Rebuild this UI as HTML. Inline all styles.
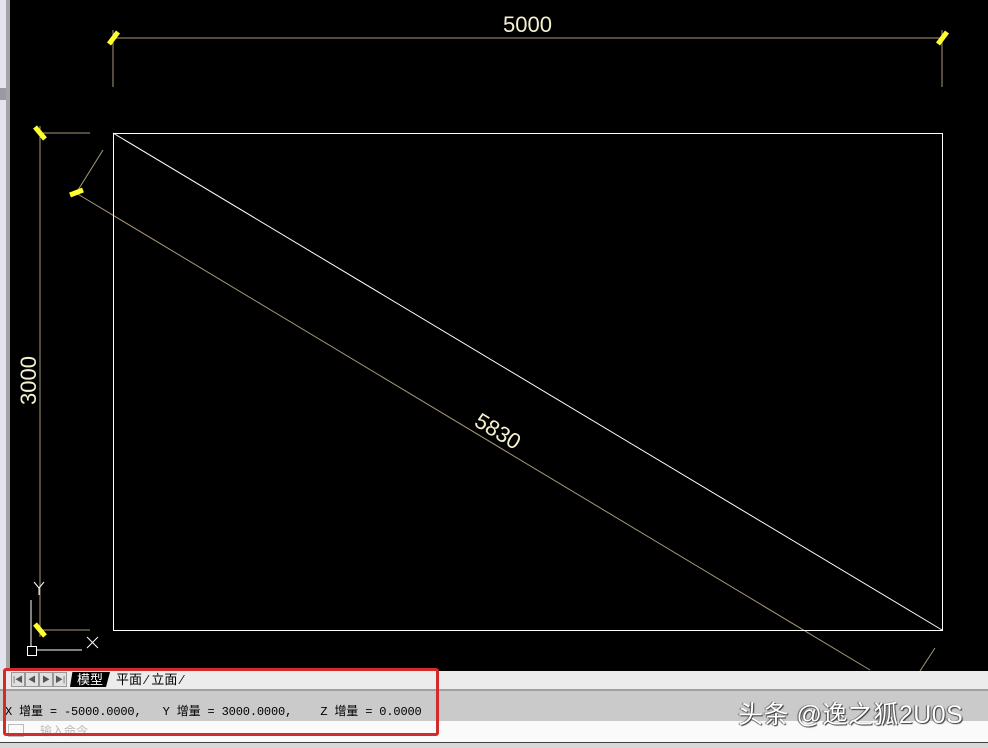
<!DOCTYPE html>
<html><head><meta charset="utf-8"><style>
body{margin:0;width:988px;height:747px;overflow:hidden;background:#000;position:relative;font-family:"Liberation Sans","Noto Sans CJK SC",sans-serif}
.a{position:absolute}
.nb{position:absolute;top:672px;width:12px;height:13px;background:#e0e0e0;border:1px solid #999;font-size:8px;color:#555;line-height:13px;text-align:center}
</style></head><body>
<div class="a" style="left:0;top:0;width:6px;height:671px;background:#e4e4ec"></div>
<div class="a" style="left:6px;top:0;width:4px;height:671px;background:#a4a4a4"></div>
<div class="a" style="left:0;top:88px;width:6px;height:12px;background:#9a9aa2"></div>
<svg class="a" style="left:0;top:0" width="988" height="671">
<g stroke="#a8987a" stroke-width="1" fill="none">
<line x1="113" y1="38" x2="942" y2="38"/>
<line x1="113" y1="30" x2="113" y2="87"/>
<line x1="942" y1="30" x2="942" y2="87"/>
<line x1="40" y1="133" x2="90" y2="133"/>
<line x1="40" y1="630" x2="90" y2="630"/>
<line x1="40" y1="126" x2="40" y2="637"/>
<line x1="76" y1="193" x2="870" y2="670"/>
<line x1="78" y1="190" x2="103" y2="150"/>
<line x1="935" y1="648" x2="920" y2="671"/>
</g>
<g stroke="#ffff30" stroke-width="5" stroke-linecap="butt">
<line x1="109" y1="44" x2="118" y2="32"/>
<line x1="938" y1="44" x2="947" y2="32"/>
<line x1="35" y1="127" x2="45" y2="139"/>
<line x1="35" y1="624" x2="45" y2="636"/>
<line x1="70" y1="195" x2="83" y2="190"/>
</g>
<rect x="113.5" y="133.5" width="829" height="497" fill="none" stroke="#fff" stroke-width="1"/>
<line x1="113" y1="133" x2="942" y2="630" stroke="#fff" stroke-width="1"/>
<g stroke="#fff" stroke-width="1" fill="none">
<line x1="31" y1="600" x2="31" y2="647"/>
<rect x="27.5" y="646.5" width="9" height="9"/>
<line x1="36" y1="650" x2="82" y2="650"/>
<line x1="87" y1="637" x2="98" y2="648"/><line x1="98" y1="637" x2="87" y2="648"/>
<line x1="34" y1="582" x2="39" y2="588"/><line x1="44" y1="582" x2="39" y2="588"/><line x1="39" y1="588" x2="39" y2="595"/>
</g>
<g fill="#f4f0d0" font-family="Liberation Sans,sans-serif" font-size="22">
<text x="503" y="32" textLength="49" lengthAdjust="spacingAndGlyphs">5000</text>
<text transform="translate(36,405) rotate(-90)" textLength="49" lengthAdjust="spacingAndGlyphs">3000</text>
<text transform="translate(473,425) rotate(31)" textLength="49" lengthAdjust="spacingAndGlyphs">5830</text>
</g>
</svg>
<div class="a" style="left:0;top:671px;width:988px;height:19px;background:#ececec"></div>
<div class="a" style="left:0;top:689px;width:988px;height:2px;background:#a0a0a0"></div>
<div class="a" style="left:0;top:691px;width:988px;height:30px;background:#cacaca"></div>
<div class="a" style="left:0;top:721px;width:988px;height:21px;background:#fafafa"></div>
<div class="a" style="left:0;top:742px;width:988px;height:5px;background:#d8d8d8;border-top:1px solid #404040"></div>
<div class="nb" style="left:11px">|◀</div>
<div class="nb" style="left:25px">◀</div>
<div class="nb" style="left:39px">▶</div>
<div class="nb" style="left:53px">▶|</div>
<div class="a" style="left:70px;top:672px;width:40px;height:15px;background:#000;color:#fff;font-size:13px;line-height:15px;text-align:center;clip-path:polygon(6% 0,100% 0,90% 100%,0 100%)">模型</div>
<div class="a" style="left:116px;top:671px;font-size:13px;line-height:17px;color:#000;white-space:pre">平面 ⁄ 立面 ⁄</div>
<div class="a" style="left:5px;top:702px;font-family:'Liberation Mono','Noto Sans CJK SC',monospace;font-size:12px;letter-spacing:-0.15px;color:#000;white-space:pre">X 增量 = -5000.0000,   Y 增量 = 3000.0000,    Z 增量 = 0.0000</div>
<div class="a" style="left:8px;top:724px;width:14px;height:11px;border:1px solid #bbb"></div>
<div class="a" style="left:40px;top:722px;font-size:12px;color:#bbb">输入命令</div>
<div class="a" style="left:738px;top:695px;font-size:25px;letter-spacing:0.5px;color:#fff;text-shadow:1px 1px 1px #333,-1px 0 1px #555">头条 @逸之狐2U0S</div>
<div class="a" style="left:3px;top:668px;width:430px;height:62px;border:3px solid #d42a2a;border-radius:3px"></div>
</body></html>
